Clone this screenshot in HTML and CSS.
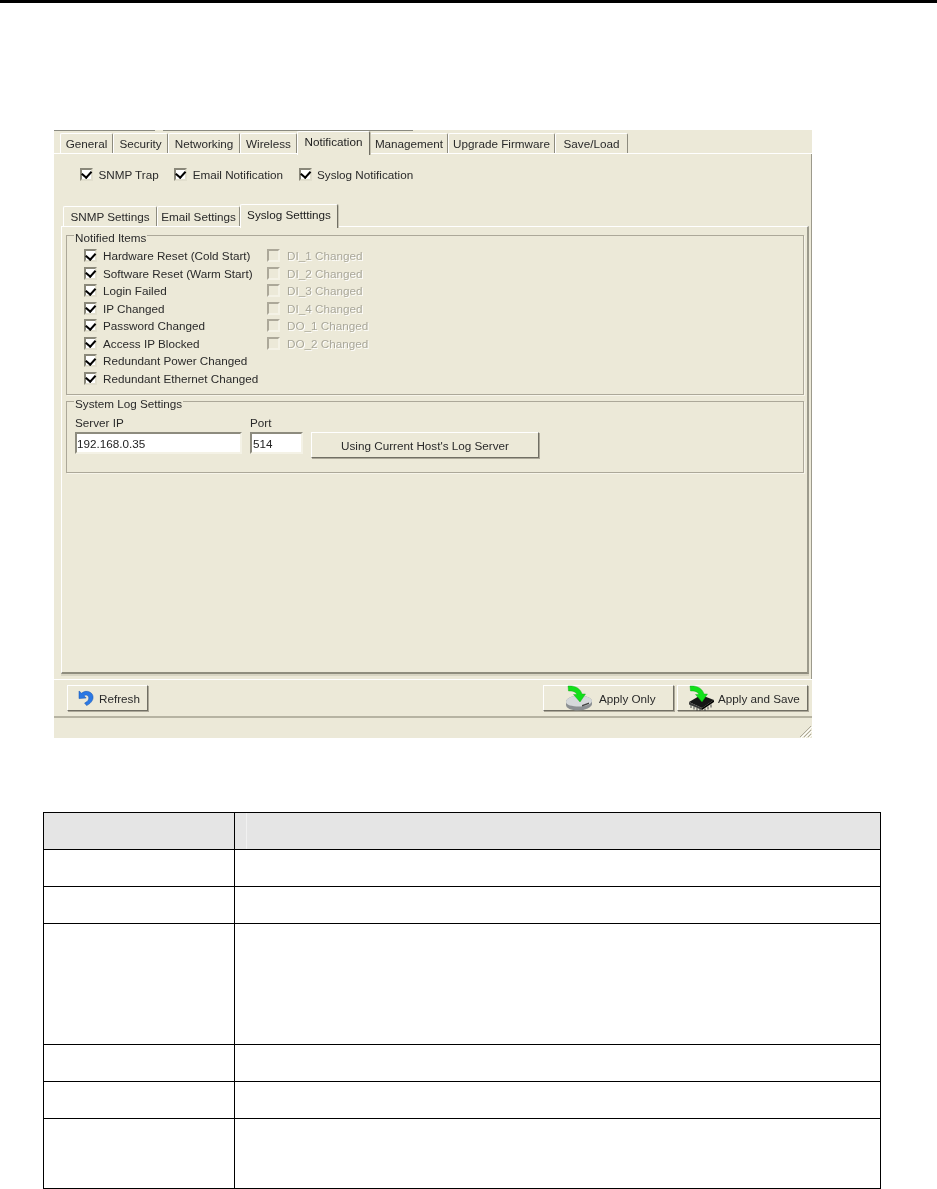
FILE: index.html
```html
<!DOCTYPE html>
<html lang="en">
<head>
<meta charset="utf-8">
<title>Syslog Settings</title>
<link rel="stylesheet" href="styles.css">
</head>
<body>
<div class="page-rule"></div>
<div class="dialog">
  <div class="edge"><span class="edge-a"></span><span class="edge-b"></span></div>
  <div class="tabs">
    <div class="tab w1">General</div>
    <div class="tab w2">Security</div>
    <div class="tab w3">Networking</div>
    <div class="tab w4">Wireless</div>
    <div class="tab active w5">Notification</div>
    <div class="tab w6">Management</div>
    <div class="tab w7">Upgrade Firmware</div>
    <div class="tab w8">Save/Load</div>
  </div>
  <div class="outer">
    <div class="mode-row">
      <label class="chk mode-snmp"><span class="box on"></span>SNMP Trap</label>
      <label class="chk mode-email"><span class="box on"></span>Email Notification</label>
      <label class="chk"><span class="box on"></span>Syslog Notification</label>
    </div>
    <div class="subtabs">
      <div class="tab s1">SNMP Settings</div>
      <div class="tab s2">Email Settings</div>
      <div class="tab active s3">Syslog Setttings</div>
    </div>
    <div class="inner">
      <div class="group notified">
        <div class="legend">Notified Items</div>
        <div class="items">
          <div class="col col-a">
            <label class="chk row"><span class="box on"></span>Hardware Reset (Cold Start)</label>
            <label class="chk row"><span class="box on"></span>Software Reset (Warm Start)</label>
            <label class="chk row"><span class="box on"></span>Login Failed</label>
            <label class="chk row"><span class="box on"></span>IP Changed</label>
            <label class="chk row"><span class="box on"></span>Password Changed</label>
            <label class="chk row"><span class="box on"></span>Access IP Blocked</label>
            <label class="chk row"><span class="box on"></span>Redundant Power Changed</label>
            <label class="chk row"><span class="box on"></span>Redundant Ethernet Changed</label>
          </div>
          <div class="col">
            <label class="chk row off"><span class="box"></span>DI_1 Changed</label>
            <label class="chk row off"><span class="box"></span>DI_2 Changed</label>
            <label class="chk row off"><span class="box"></span>DI_3 Changed</label>
            <label class="chk row off"><span class="box"></span>DI_4 Changed</label>
            <label class="chk row off"><span class="box"></span>DO_1 Changed</label>
            <label class="chk row off"><span class="box"></span>DO_2 Changed</label>
          </div>
        </div>
      </div>
      <div class="group syslog">
        <div class="legend">System Log Settings</div>
        <div class="fields">
          <div class="field f-ip"><span class="f-label">Server IP</span><span class="input">192.168.0.35</span></div>
          <div class="field f-port"><span class="f-label">Port</span><span class="input">514</span></div>
          <div class="btn host-btn">Using Current Host's Log Server</div>
        </div>
      </div>
    </div>
  </div>
  <div class="actions">
    <div class="btn refresh">
      <svg width="16" height="16" viewBox="0 0 16 16"><path d="M1 1 L3.6 3.2 C6 1.2 9 .8 11.6 2 C15 3.6 16 7.4 14.2 10.6 C13 12.8 10.8 14.6 8.6 15.6 L6.6 13 C8.4 12.2 10 11 10.6 9.2 C11.2 7.4 10.4 5.8 8.8 5.2 C7.8 4.9 6.8 5.2 6 5.8 L8.2 8 L1 8.6 Z" fill="#2a78e4" stroke="#1450ad" stroke-width=".5"/></svg>
      <span>Refresh</span>
    </div>
    <div class="spacer"></div>
    <div class="btn apply apply-only">
      <svg width="28" height="26" viewBox="0 0 28 26">
        <path d="M1 17 C1 13 8 10.5 14 10.5 C21 10.5 27 13 27 16 L27 19 C27 22 20 25.5 13 25.5 C6 25.5 1 23 1 20 Z" fill="#8b8f92"/>
        <path d="M1 17 C1 13 8 10.5 14 10.5 C21 10.5 27 13 27 16 C27 19 20 21.5 14 21.5 C7 21.5 1 20 1 17 Z" fill="#d5d8da"/>
        <path d="M17 20 L24 17.5 L24 19 L17 21.5 Z" fill="#444"/>
        <path d="M3 1 C9 .5 15 2.5 17 9 L20.5 9 L15 17 L8.5 9.5 L12 9.5 C10.8 7 8 5.5 3.5 6 Z" fill="#12e01a" stroke="#09a012" stroke-width=".4"/>
      </svg>
      <span>Apply Only</span>
    </div>
    <div class="btn apply apply-save">
      <svg width="27" height="26" viewBox="0 0 27 26">
        <path d="M1 17 L13 10 L26 15 L14 23 Z" fill="#161616"/>
        <path d="M1 17 L14 23 L14 25 L1 19.5 Z" fill="#3a3a3a"/>
        <path d="M14 23 L26 15 L26 17 L14 25 Z" fill="#000"/>
        <path d="M3 20 V23 M6 21.5 V24.5 M9 23 V26 M12 24 V26 M17 23.5 V26 M20 21.5 V24.5 M23 19.5 V22.5" stroke="#444" stroke-width="1"/>
        <path d="M2 1 C8 .5 14 2.5 16 9 L19.5 9 L14 17 L7.5 9.5 L11 9.5 C9.8 7 7 5.5 2.5 6 Z" fill="#12e01a" stroke="#09a012" stroke-width=".4"/>
      </svg>
      <span>Apply and Save</span>
    </div>
  </div>
  <div class="status">
    <svg class="grip" width="13" height="13" viewBox="0 0 13 13"><path d="M12 1 L1 12 M12 5 L5 12 M12 9 L9 12" stroke="#aca899" stroke-width="1"/><path d="M13 2 L2 13 M13 6 L6 13 M13 10 L10 13" stroke="#fff" stroke-width="1"/></svg>
  </div>
</div>
<table class="params">
  <colgroup><col class="c1"><col></colgroup>
  <tr class="r37 head"><td></td><td class="head-2"></td></tr>
  <tr class="r37"><td></td><td></td></tr>
  <tr class="r37"><td></td><td></td></tr>
  <tr class="r121"><td></td><td></td></tr>
  <tr class="r37"><td></td><td></td></tr>
  <tr class="r37"><td></td><td></td></tr>
  <tr class="r70"><td></td><td></td></tr>
</table>
</body>
</html>
```
FILE: styles.css
```css
* { box-sizing: border-box; }
html, body { margin: 0; padding: 0; background: #fff; }
body { height: 1189px; overflow: hidden; font-family: "Liberation Sans", Arial, sans-serif; font-size: 11.7px; color: #2a2a2a; }

.page-rule { height: 3px; background: #000; }

.dialog { width: 758px; height: 608px; margin: 127px 0 0 54px; background: #ece9d8; display: flex; flex-direction: column; filter: blur(.3px); }
.edge { display: flex; height: 1px; background: #ece9d8; }
.edge-a { width: 101px; background: #8a8a80; }
.edge-b { width: 250px; margin-left: 8px; background: #8a8a80; }

.tabs { display: flex; align-items: flex-end; height: 23px; padding-left: 6px; border-bottom: 1px solid #fff; flex: none; }
.tab { height: 20px; line-height: 20px; text-align: center; white-space: nowrap; border-top: 1px solid #fff; border-left: 1px solid #fff; border-right: 1px solid #8d8b7e; border-radius: 2px 2px 0 0; flex: none; background: #ece9d8; }
.tab.active { height: 24px; line-height: 20px; margin-bottom: -2px; padding-bottom: 2px; position: relative; color: #1c1c1c; border-right-color: #716f64; box-shadow: 1px 0 0 #c4c1b0; }
.w1 { width: 53px; } .w2 { width: 55px; } .w3 { width: 72px; } .w4 { width: 57px; }
.w5 { width: 73px; } .w6 { width: 78px; } .w7 { width: 107px; } .w8 { width: 73px; }

.outer { flex: none; height: 525px; border-right: 1px solid #9c9a8c; }
.mode-row { display: flex; gap: 15.5px; padding: 14px 0 0 26px; height: 49px; }
.chk { display: flex; align-items: center; gap: 5.5px; height: 13px; white-space: nowrap; }
.box { width: 13px; height: 13px; flex: none; background: #fff; border: 2px solid; border-color: #8a887a #e2dfce #e2dfce #8a887a; position: relative; display: flex; align-items: center; justify-content: center; }
.box.on::after { content: ""; width: 7.5px; height: 4.5px; margin-top: -2px; border-left: 2px solid #000; border-bottom: 2px solid #000; transform: rotate(-48deg); }
.off { color: #a9a799; text-shadow: 1px 1px 0 #fff; }
.off .box { background: #ece9d8; border-color: #aca899 #f4f2e6 #f4f2e6 #aca899; }

.subtabs { display: flex; align-items: flex-end; height: 23px; padding-left: 9px; }
.s1 { width: 94px; } .s2 { width: 83px; } .s3 { width: 98px; }

.inner { width: 748px; height: 448px; margin-left: 7px; padding: 8px 0 0 4px; border-top: 1px solid #fff; border-left: 1px solid #fff; border-right: 2px solid #9c9a8c; border-bottom: 2px solid #8f8d7e; box-shadow: 0 2px 0 #d8d5c3; }

.group { position: relative; width: 738px; border: 1px solid #aca899; box-shadow: 1px 1px 0 #f7f5ea; }
.legend { position: absolute; left: 7px; top: -5px; padding: 0 1px; background: #ece9d8; line-height: 13px; }
.notified { height: 160px; padding: 11px 0 0 17px; }
.items { display: flex; }
.col { display: flex; flex-direction: column; }
.col-a { width: 183px; }
.row { height: 17.5px; gap: 6px; }
.row.off { gap: 7px; }
.syslog { height: 72px; margin-top: 6px; padding: 14px 0 0 8px; }
.fields { display: flex; align-items: flex-start; }
.field { display: flex; flex-direction: column; gap: 3px; }
.f-label { line-height: 13px; }
.f-ip { width: 167px; margin-right: 8px; }
.f-port { width: 53px; margin-right: 8px; }
.input { height: 22px; line-height: 19px; background: #fff; color: #222; border: 2px solid; border-color: #8d8b7e #f4f2e6 #f4f2e6 #8d8b7e; }
.f-port .input { padding-left: 1px; }
.btn { display: flex; align-items: center; justify-content: center; background: #ece9d8; border: 1px solid; border-color: #fff #716f64 #716f64 #fff; box-shadow: 1px 1px 0 #aca899; }
.host-btn { width: 228px; height: 26px; margin-top: 16px; }

.actions { flex: none; display: flex; height: 39px; padding: 5px 4px 0 13px; border-top: 1px solid #fff; border-bottom: 2px solid #b6b3a2; }
.spacer { flex: 1; }
.btn.refresh { width: 81px; height: 26px; gap: 5px; justify-content: flex-start; padding-left: 10px; }
.apply { width: 131px; height: 26px; justify-content: flex-start; }
.apply-only { margin-right: 3px; padding-left: 21px; gap: 6px; }
.apply-save { padding-left: 10px; gap: 3px; }
.status { flex: 1; display: flex; justify-content: flex-end; align-items: flex-end; }

.params { border-collapse: collapse; table-layout: fixed; width: 838px; margin: 74px 0 0 43px; }
.params td { border: 1px solid #000; padding: 0; }
.c1 { width: 191px; }
.r37 { height: 37px; }
.r121 { height: 121px; }
.r70 { height: 70px; }
.head td { background: #e5e5e5; }
.head .head-2 { background-image: linear-gradient(#f1f1f1, #f1f1f1); background-repeat: no-repeat; background-size: 1px 100%; background-position: 11px 0; }
```
